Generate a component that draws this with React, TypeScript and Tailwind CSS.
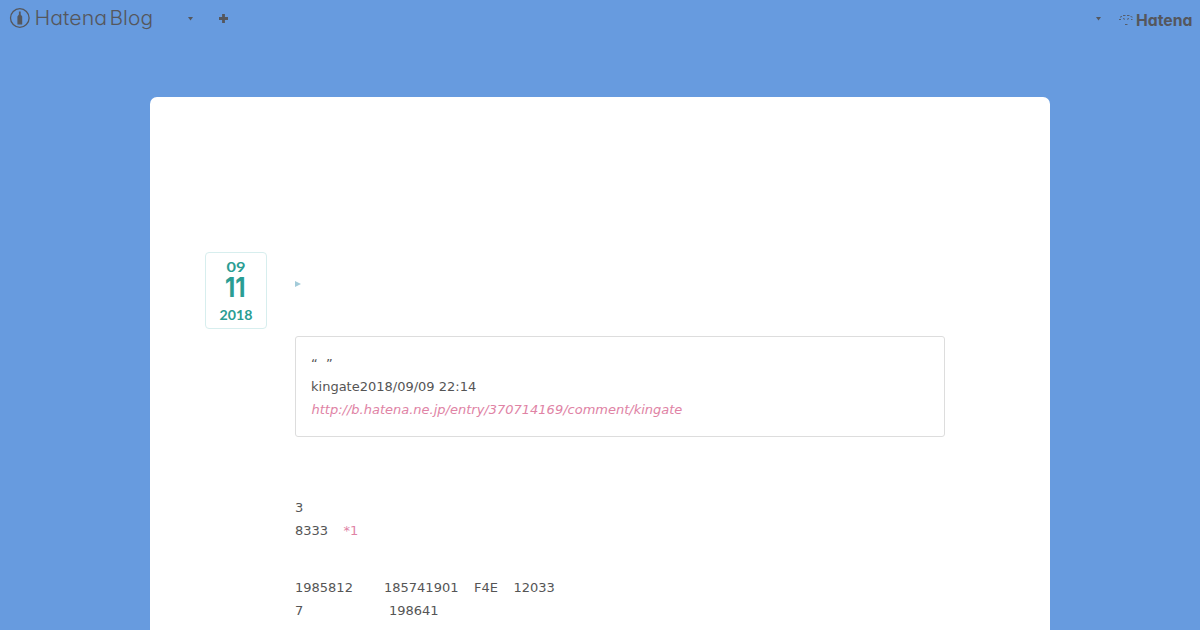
type DateBadgeProps = {
  month: string;
  day: string;
  year: string;
};

const App = () => {
  return (
    <div className="h-screen overflow-hidden bg-[#679bdf] font-['DejaVu_Sans',sans-serif] text-[13px] leading-[23px] text-[#555555]">
      <Header />
      <main className="mx-auto mt-[60px] h-[600px] w-[900px] rounded-[7px] bg-white pt-[155px] pr-[105px] pl-[55px]">
        <article className="flex gap-[28px]">
          <DateBadge month="09" day="11" year="2018" />
          <Entry />
        </article>
      </main>
    </div>
  );
};

export default App;

const Caret = () => (
  <svg className="h-[4px] w-[5px]" viewBox="0 0 5 4">
    <path d="M0 0h5L2.5 3.5z" fill="#55575d" />
  </svg>
);

const Header = () => {
  return (
    <header className="flex h-[37px] items-start justify-between text-[#55575d]">
      <div className="flex">
        <svg className="h-[37px] w-[160px] font-['Inter',sans-serif] [font-feature-settings:'cv11']" viewBox="0 0 160 37" fill="#55575d">
          <circle cx="19.8" cy="18" r="9.3" fill="none" stroke="#55575d" strokeWidth="1.3" />
          <path d="M18.9 11.5h1.8v3l1.5 2V24.5h-4.8v-8l1.5-2z" />
          <text x="34.5" y="25" fontWeight="300" fontSize="20" textLength="72.5" lengthAdjust="spacingAndGlyphs">
            Hatena
          </text>
          <text x="109.5" y="25" fontWeight="300" fontSize="20" textLength="43.5" lengthAdjust="spacingAndGlyphs">
            Blog
          </text>
        </svg>
        <div className="ml-7 pt-[17px]">
          <Caret />
        </div>
        <svg className="mt-[14px] ml-[26px] h-[9px] w-[9px]" viewBox="0 0 9 9">
          <path d="M4.5 0v9M0 4.5h9" stroke="#55575d" strokeWidth="2.8" />
        </svg>
      </div>
      <div className="flex">
        <div className="pt-[17px]">
          <Caret />
        </div>
        <svg className="ml-[18px] h-[37px] w-[81px] font-['Inter',sans-serif] [font-feature-settings:'cv11']" viewBox="0 0 81 37" fill="#55575d">
          <path
            d="M4 15.5h2.5M8 15.5h2.5M1 17.2l2-.8M11.5 16.4l2 .8M0 19.5h2M4 18.5l2 .8M8 19.3l2-.8M12 19.5h1.5M6 24.5h2.5"
            fill="none"
            stroke="#55575d"
            strokeWidth="0.9"
          />
          <text x="17" y="26" fontWeight="700" fontSize="16" textLength="56.5" lengthAdjust="spacingAndGlyphs">
            Hatena
          </text>
        </svg>
      </div>
    </header>
  );
};

const DateBadge = ({ month, day, year }: DateBadgeProps) => {
  return (
    <time className="h-[77px] w-[62px] shrink-0 rounded-[4px] border border-[#d7eeee] font-['Lato',sans-serif] font-bold">
      <svg className="h-[75px] w-[60px]" viewBox="0 0 60 75" fill="#2a9d93">
        <text x="20.5" y="19" fontSize="14" textLength="19" lengthAdjust="spacingAndGlyphs">{month}</text>
        <text x="19" y="44" fontFamily="Inter" fontSize="27.5" textLength="20.5" lengthAdjust="spacingAndGlyphs">{day}</text>
        <text x="13.5" y="67" fontSize="14" textLength="33" lengthAdjust="spacingAndGlyphs">{year}</text>
      </svg>
    </time>
  );
};

const Entry = () => {
  return (
    <div className="w-[650px] whitespace-pre">
      <div className="h-[84px] pt-[29px]">
        <svg className="h-[6px] w-[6px]" viewBox="0 0 6 6">
          <path d="M0 0l6 3-6 3z" fill="#a3cbd9" />
        </svg>
      </div>
      <blockquote className="rounded-[3px] border border-[#dddddd] p-[15px]">
        <p>{"“  ”"}</p>
        <p>kingate2018/09/09 22:14</p>
        <p className="pl-[0.5px]">
          <a className="text-[#e083a5] italic">http://b.hatena.ne.jp/entry/370714169/comment/kingate</a>
        </p>
      </blockquote>
      <div className="mt-[59px]">
        <p>3</p>
        <p className="flex gap-[15.5px]">
          <span>8333</span>
          <a className="text-[#e083a5]">*1</a>
        </p>
      </div>
      <div className="mt-[34px]">
        <p className="flex">
          <span className="w-[89px]">1985812</span>
          <span className="w-[90px]">185741901</span>
          <span className="w-[39.5px]">F4E</span>
          <span>12033</span>
        </p>
        <p className="flex">
          <span className="w-[94px]">7</span>
          <span>198641</span>
        </p>
      </div>
    </div>
  );
};
